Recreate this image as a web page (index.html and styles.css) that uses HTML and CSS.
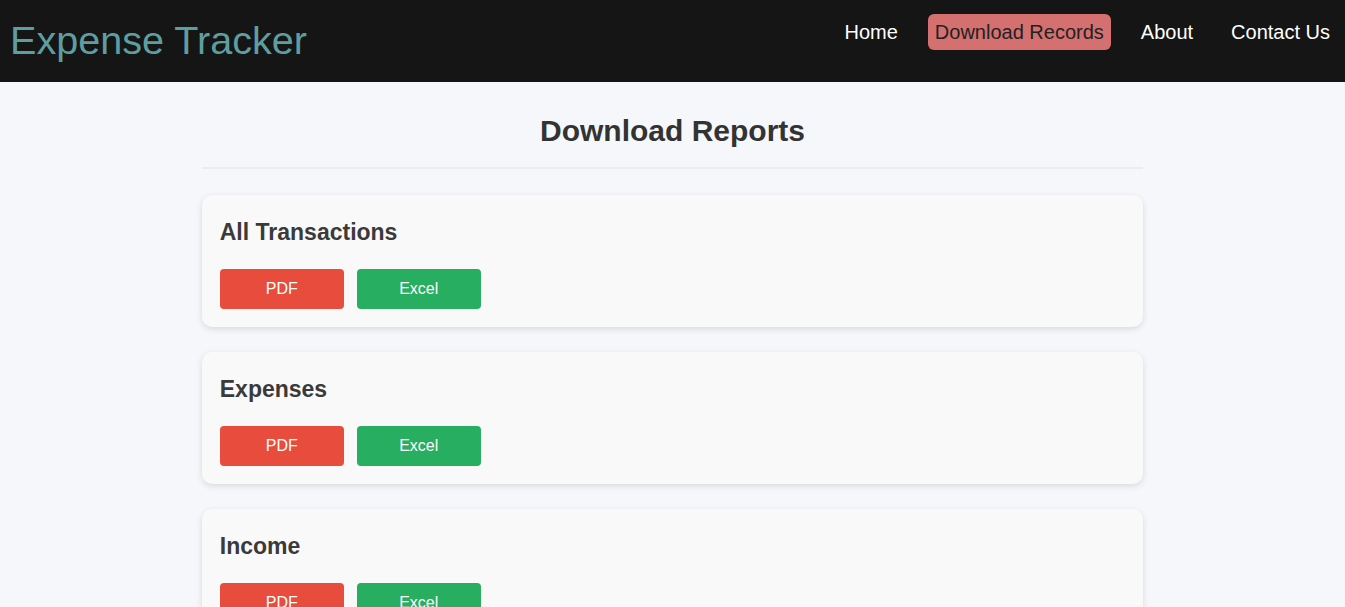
FILE: index.html
```html
<!DOCTYPE html>
<html lang="en">
<head>
<meta charset="utf-8">
<title>Expense Tracker</title>
<link rel="stylesheet" href="styles.css">
</head>
<body>
<header class="topbar">
  <div class="brand">Expense Tracker</div>
  <nav class="nav">
    <a class="nav-link" href="#">Home</a>
    <a class="nav-link active" href="#">Download Records</a>
    <a class="nav-link" href="#">About</a>
    <a class="nav-link" href="#">Contact Us</a>
  </nav>
</header>
<main class="container">
  <h1 class="page-title">Download Reports</h1>
  <section class="card">
    <h3 class="card-title">All Transactions</h3>
    <div class="actions">
      <a class="btn btn-pdf" href="#">PDF</a>
      <a class="btn btn-excel" href="#">Excel</a>
    </div>
  </section>
  <section class="card">
    <h3 class="card-title">Expenses</h3>
    <div class="actions">
      <a class="btn btn-pdf" href="#">PDF</a>
      <a class="btn btn-excel" href="#">Excel</a>
    </div>
  </section>
  <section class="card">
    <h3 class="card-title">Income</h3>
    <div class="actions">
      <a class="btn btn-pdf" href="#">PDF</a>
      <a class="btn btn-excel" href="#">Excel</a>
    </div>
  </section>
</main>
</body>
</html>
```

FILE: styles.css
```css
* { box-sizing: border-box; }
html, body { margin: 0; padding: 0; }
body {
  background: #f5f7fa;
  font-family: "Liberation Sans", Arial, sans-serif;
  color: #333;
}
.topbar {
  height: 82px;
  background: #151515;
  display: flex;
  justify-content: space-between;
  align-items: flex-start;
  padding: 0 7px 0 10px;
}
.brand {
  margin-top: 17px;
  font-size: 39.6px;
  line-height: 46px;
  color: #5f9ea0;
}
.nav {
  margin-top: 14px;
  display: flex;
  gap: 22px;
}
.nav-link {
  display: block;
  padding: 6px 8px;
  font-size: 20px;
  line-height: 24px;
  color: #fff;
  text-decoration: none;
  border-radius: 6px;
}
.nav-link.active {
  background: #d47070;
  color: #222;
  padding: 6px 7px;
}
.container {
  width: 70%;
  margin: 0 auto;
  padding-top: 32px;
}
.page-title {
  margin: 0 0 26px;
  text-align: center;
  font-size: 30px;
  line-height: 34px;
  font-weight: bold;
  color: #333;
  padding-bottom: 19px;
  border-bottom: 2px solid #eaecef;
}
.card {
  background: #f9f9f9;
  border-radius: 10px;
  box-shadow: 0 2px 6px rgba(0, 0, 0, 0.12);
  padding: 24px 18px 18px;
  margin-bottom: 25px;
}
.card-title {
  margin: 0 0 24px;
  font-size: 23px;
  line-height: 26px;
  font-weight: bold;
  color: #3a3a3a;
}
.actions {
  display: flex;
  gap: 13px;
}
.btn {
  display: flex;
  align-items: center;
  justify-content: center;
  width: 124px;
  height: 40px;
  border-radius: 4px;
  color: #fff;
  font-size: 16px;
  text-decoration: none;
}
.btn-pdf { background: #e74c3c; }
.btn-excel { background: #27ae60; }
```
